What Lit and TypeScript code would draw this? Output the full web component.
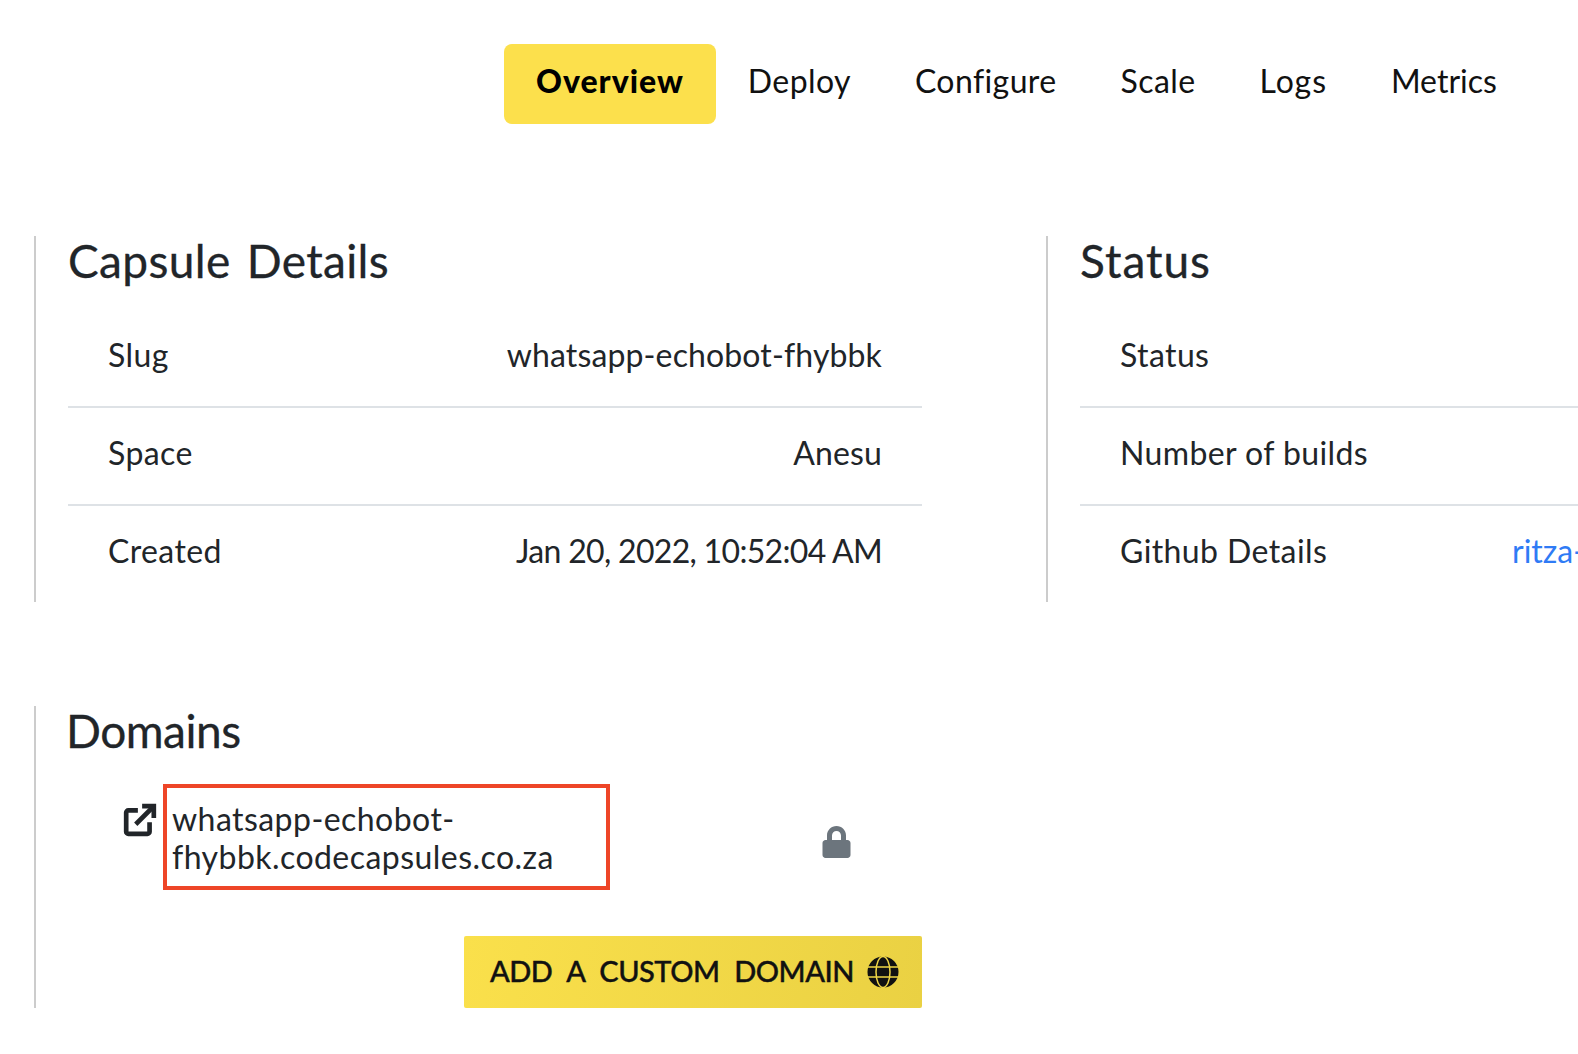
import { LitElement, css, html } from 'lit'
import { customElement } from 'lit/decorators.js'

const tabs = ['Overview', 'Deploy', 'Configure', 'Scale', 'Logs', 'Metrics']

const details = [
  ['Slug', 'whatsapp-echobot-fhybbk'],
  ['Space', 'Anesu'],
  ['Created', 'Jan 20, 2022, 10:52:04 AM'],
]

@customElement('app-root')
export class AppRoot extends LitElement {
  static styles = css`
  :host {
    display: block;
    width: 1578px;
    height: 1054px;
    overflow: hidden;
    background: #fff;
    color: #212529;
    font-family: Lato, "Open Sans", sans-serif;
    font-size: 32px;
  }

  .nav {
    display: flex;
    margin: 44px 0 0 504px;
    height: 80px;
  }

  .tab {
    display: flex;
    align-items: center;
    padding: 0 32px 8px;
    border-radius: 8px;
    color: #111;
    letter-spacing: 0.4px;
  }

  .tab:nth-child(5) {
    letter-spacing: 0.9px;
  }

  .tab:last-child {
    letter-spacing: 0;
  }

  .tab.active {
    background: #fce04c;
    color: #000;
    font-weight: 900;
    letter-spacing: 1px;
  }

  .columns {
    display: flex;
    margin: 112px 0 0 34px;
    width: 1544px;
  }

  .section {
    box-sizing: border-box;
    flex: 0 0 1012px;
    border-left: 2px solid #ccc;
    padding-left: 32px;
  }

  .section.narrow {
    flex: 0 0 532px;
  }

  h2 {
    margin: 0;
    font-weight: 400;
    font-size: 46px;
    height: 74px;
    line-height: 50px;
    letter-spacing: 0.35px;
    word-spacing: 4px;
    -webkit-text-stroke: 0.3px #212529;
  }

  .narrow h2 {
    letter-spacing: 1px;
  }

  .table {
    width: 854px;
  }

  .row {
    box-sizing: border-box;
    display: flex;
    justify-content: space-between;
    align-items: center;
    height: 98px;
    padding: 0 40px 8px;
    border-bottom: 2px solid #dee2e6;
    white-space: nowrap;
  }

  .row:last-child {
    height: 96px;
    border-bottom: 0;
  }

  .label {
    letter-spacing: 0.4px;
  }

  .value {
    letter-spacing: 0.13px;
  }

  .row:last-child .value {
    letter-spacing: -0.68px;
  }

  .table.wide .row {
    justify-content: flex-start;
  }

  .table.wide .label {
    flex: 0 0 392px;
  }

  .table.wide .row .link {
    color: #2f7bf5;
    letter-spacing: 0;
  }

  .domains {
    box-sizing: border-box;
    display: flex;
    flex-direction: column;
    margin: 104px 0 0 34px;
    width: 888px;
    height: 302px;
    border-left: 2px solid #ccc;
    padding-left: 32px;
  }

  .domains h2 {
    height: 78px;
    margin-left: -2px;
    letter-spacing: -0.5px;
  }

  .domain {
    display: flex;
    align-items: flex-start;
    padding-left: 56px;
  }

  .external {
    width: 34px;
    height: 34px;
    margin: 19px 6px 0 -1px;
    color: #212529;
  }

  .box {
    box-sizing: border-box;
    width: 447px;
    height: 106px;
    border: 4px solid #ee4527;
    padding: 12px 5px;
    line-height: 37.5px;
    letter-spacing: 0.45px;
  }

  .lock {
    width: 29px;
    height: 32px;
    margin: 42px 0 0 212px;
    fill: #6c757d;
  }

  .add {
    display: flex;
    align-items: center;
    align-self: flex-end;
    box-sizing: border-box;
    width: 458px;
    height: 72px;
    margin: 46px 0 0;
    padding: 0 23px 0 26px;
    justify-content: space-between;
    border-radius: 2px;
    background: linear-gradient(100deg, #fae04b, #ead143);
    color: #111;
    font-size: 29px;
    font-weight: 500;
    letter-spacing: -0.5px;
    word-spacing: 8px;
    white-space: nowrap;
    -webkit-text-stroke: 0.4px #111;
  }

  .add span {
    margin-bottom: 4px;
  }

  .globe {
    width: 32px;
    height: 32px;
    flex: none;
  }
`

  renderTable(rows: string[][]) {
    return html`
      <div class="table">
        ${rows.map(([label, value]) => html`
          <div class="row"><span class="label">${label}</span><span class="value">${value}</span></div>
        `)}
      </div>
    `
  }

  render() {
    return html`
      <nav class="nav">
        ${tabs.map((tab, i) => html`<div class="tab ${i === 0 ? 'active' : ''}">${tab}</div>`)}
      </nav>

      <div class="columns">
        <section class="section">
          <h2>Capsule Details</h2>
          ${this.renderTable(details)}
        </section>
        <section class="section narrow">
          <h2>Status</h2>
          <div class="table wide">
            <div class="row"><span class="label">Status</span></div>
            <div class="row"><span class="label">Number of builds</span></div>
            <div class="row"><span class="label">Github Details</span><span class="value link">ritza-</span></div>
          </div>
        </section>
      </div>

      <section class="domains">
        <h2>Domains</h2>
        <div class="domain">
          <svg class="external" viewBox="0 0 32 32" fill="none" stroke="currentColor" stroke-width="4.4">
            <path d="M14 7H5a2 2 0 0 0-2 2v18a2 2 0 0 0 2 2h18a2 2 0 0 0 2-2v-9" />
            <path d="M12 20 28 4" />
            <path d="M18 3h11v11" />
          </svg>
          <div class="box">whatsapp-echobot-<br />fhybbk.codecapsules.co.za</div>
          <svg class="lock" viewBox="0 0 448 512">
            <path d="M400 224h-24v-72C376 68.2 307.8 0 224 0S72 68.2 72 152v72H48c-26.5 0-48 21.5-48 48v192c0 26.5 21.5 48 48 48h352c26.5 0 48-21.5 48-48V272c0-26.5-21.5-48-48-48zm-104 0H152v-72c0-39.7 32.3-72 72-72s72 32.3 72 72v72z" />
          </svg>
        </div>
        <div class="add">
          <span>ADD A CUSTOM DOMAIN</span>
          <svg class="globe" viewBox="0 0 32 32">
            <circle cx="16" cy="16" r="15.5" fill="#111" />
            <g fill="none" stroke="#f0d646" stroke-width="1.5">
              <ellipse cx="16" cy="16" rx="7" ry="15.5" />
              <path d="M1 11h30M1 21h30" />
            </g>
          </svg>
        </div>
      </section>
    `
  }
}
